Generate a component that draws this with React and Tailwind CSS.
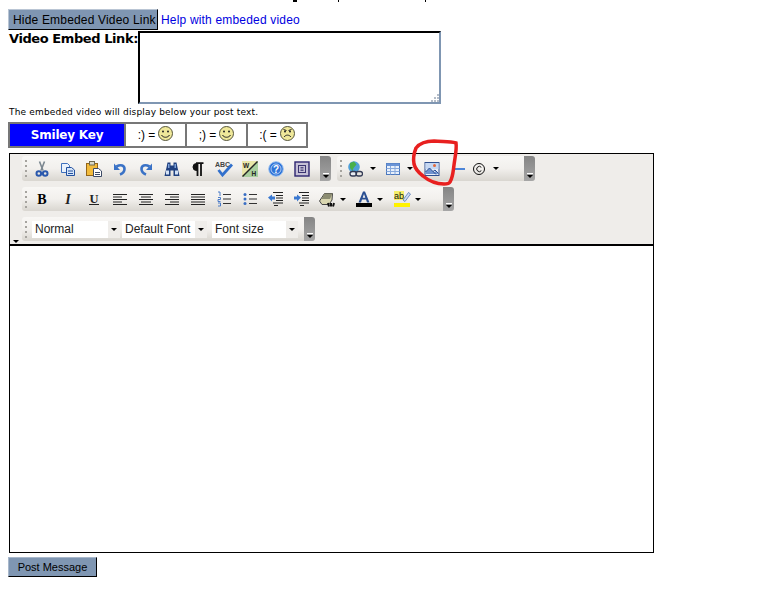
import React from "react";

const sans = "font-['DejaVu_Sans',sans-serif]";
const arial = "font-['Liberation_Sans',sans-serif]";

function Ic({ children }) {
  return (
    <svg width="16" height="16" viewBox="0 0 16 16" fill="none" className="shrink-0">
      {children}
    </svg>
  );
}

const Cut = () => (
  <Ic>
    <path d="M5.500 0.500l3.500 9M10.500 0.500L7 9.500" stroke="#7b8790" strokeWidth="1.600" />
    <circle cx="4.800" cy="12.500" r="2.300" stroke="#2a58ad" strokeWidth="2" />
    <circle cx="11.200" cy="12.500" r="2.300" stroke="#2a58ad" strokeWidth="2" />
  </Ic>
);
const Copy = () => (
  <Ic>
    <path d="M1.500 2.500h6l2 2v7h-8z" fill="#eaf2fc" stroke="#3f70bd" />
    <path d="M6.500 6.500h5l3 2.500v5.500h-8z" fill="#d5e5f8" stroke="#24519f" />
    <path d="M8 10h5M8 12.500h5" stroke="#24519f" />
  </Ic>
);
const Paste = () => (
  <Ic>
    <rect x="0.500" y="2.500" width="11" height="12" fill="#f2bb3c" stroke="#93651a" />
    <rect x="3.500" y="0.500" width="5" height="3.500" fill="#d8d8c8" stroke="#6f6a50" />
    <path d="M7.500 7.500h5l3 2.500v5.500h-8z" fill="#fff" stroke="#3c4a66" />
    <path d="M9 11.500h5M9 13.500h5" stroke="#3c4a66" />
  </Ic>
);
const Undo = () => (
  <Ic>
    <path d="M4.500 5.500c4.500-2.500 8-1 8 2.500 0 2.500-2 4.500-4.500 5.500" stroke="#3a72c6" strokeWidth="2.600" />
    <path d="M2 2.500v6.500h6z" fill="#3a72c6" />
  </Ic>
);
const Redo = () => (
  <Ic>
    <path d="M11.500 5.500C7 3 3.500 4.500 3.500 8c0 2.500 2 4.500 4.500 5.500" stroke="#3a72c6" strokeWidth="2.600" />
    <path d="M14 2.500v6.500H8z" fill="#3a72c6" />
  </Ic>
);
const Find = () => (
  <Ic>
    <path d="M3.500 1.500h3v3h3v-3h3l1 5 2 8.500H9.500V9.500h-3V15H.500l2-8.500z" fill="#20407f" />
    <rect x="2" y="9.500" width="3" height="4" fill="#d3e2f6" />
    <rect x="11" y="9.500" width="3" height="4" fill="#d3e2f6" />
    <rect x="4" y="3" width="1.500" height="4" fill="#7fa3da" />
    <rect x="10.500" y="3" width="1.500" height="4" fill="#7fa3da" />
  </Ic>
);
const Pilcrow = () => (
  <Ic>
    <path d="M7 2.500H6.500a3.500 3.500 0 0 0 0 7H7z" fill="#111" stroke="#111" />
    <path d="M7.500 2v13M11 2v13M6 2.200h7.500" stroke="#111" strokeWidth="1.800" />
  </Ic>
);
const Spell = () => (
  <svg width="18" height="16" viewBox="0 0 18 16" fill="none" className="shrink-0">
    <text x="0" y="6" fontSize="7" fontWeight="700" fontFamily="Liberation Sans, sans-serif" fill="#444">ABC</text>
    <path d="M3.500 9l4 5L17 3.500" stroke="#3270cc" strokeWidth="2.800" />
  </svg>
);
const Wh = () => (
  <Ic>
    <path d="M0 0h16L0 16z" fill="#e9e6a8" />
    <path d="M16 0v16H0z" fill="#a9cf9f" />
    <path d="M0.500 15.500L15.500 0.500" stroke="#222" strokeWidth="1.400" />
    <text x="1" y="7" fontSize="6.500" fontWeight="700" fontFamily="Liberation Sans, sans-serif" fill="#222">W</text>
    <text x="9.500" y="14.500" fontSize="6.500" fontWeight="700" fontFamily="Liberation Sans, sans-serif" fill="#222">H</text>
  </Ic>
);
const Help = () => (
  <Ic>
    <circle cx="8" cy="8" r="7.300" fill="#2f74d8" stroke="#9cc2f0" />
    <circle cx="8" cy="8" r="5" stroke="#cfe0f7" strokeWidth="0.800" />
    <text x="8" y="11.500" textAnchor="middle" fontSize="10" fontWeight="700" fontFamily="Liberation Sans, sans-serif" fill="#fff">?</text>
  </Ic>
);
const Source = () => (
  <Ic>
    <rect x="1" y="1" width="14" height="14" fill="#c5c0d6" stroke="#2d2470" strokeWidth="1.400" />
    <rect x="4.500" y="4.500" width="7" height="7" stroke="#3a3370" />
    <path d="M6.500 6.500h3M6.500 8h3M6.500 9.500h3" stroke="#3a3370" strokeWidth="0.800" />
  </Ic>
);
const LinkGlobe = () => (
  <Ic>
    <circle cx="7" cy="6" r="5.800" fill="#4fa0d8" />
    <path d="M3 2l4-1.500 2.500 3L6.500 7l-1 3-2.500-3z" fill="#49b04a" />
    <rect x="3" y="10.500" width="6.500" height="4.500" rx="2.200" stroke="#333b55" strokeWidth="1.300" fill="#e8ecf2" />
    <rect x="9" y="10.500" width="6.500" height="4.500" rx="2.200" stroke="#333b55" strokeWidth="1.300" />
  </Ic>
);
const TableIc = () => (
  <Ic>
    <rect x="1.500" y="2.500" width="13" height="11" fill="#e8f0fb" stroke="#4c78bd" />
    <rect x="1.500" y="2.500" width="13" height="2.500" fill="#6a94d6" />
    <path d="M1.500 7.500h13M1.500 10.500h13M5.500 5v8.500M10 5v8.500" stroke="#86a8dc" />
  </Ic>
);
const Pic = () => (
  <Ic>
    <rect x="1" y="1.500" width="14" height="13" fill="#e7eef9" stroke="#2d4f8f" />
    <path d="M1.500 2h13v6h-13z" fill="#c6d8f2" />
    <circle cx="10.500" cy="4.500" r="1.500" fill="#e2683a" />
    <path d="M1.500 13V11l4-4 4.500 4.500 1.500-1.500 3 3v0z" fill="#6f93cf" />
    <path d="M1.500 11l4-4 6.500 6.500M9 10.500l2-1.500 3.500 3.500" stroke="#2a4f94" />
  </Ic>
);
const Copyright = () => (
  <Ic>
    <circle cx="8" cy="8" r="5.500" stroke="#111" />
    <path d="M10.300 6.300a2.600 2.600 0 1 0 0 3.400" stroke="#111" />
  </Ic>
);
const Bold = () => (
  <Ic>
    <text x="8" y="12.500" textAnchor="middle" fontSize="14" fontWeight="700" fontFamily="Liberation Serif, serif" fill="#000">B</text>
  </Ic>
);
const Italic = () => (
  <Ic>
    <text x="8" y="12.500" textAnchor="middle" fontSize="14" fontStyle="italic" fontWeight="700" fontFamily="Liberation Serif, serif" fill="#222">I</text>
  </Ic>
);
const Under = () => (
  <Ic>
    <text x="8" y="11.500" textAnchor="middle" fontSize="12.500" fontWeight="700" fontFamily="Liberation Serif, serif" fill="#222">U</text>
    <path d="M3 13.500h10" stroke="#222" />
  </Ic>
);
const lines = {
  left: [14, 9, 14, 9, 14],
  center: [14, 10, 14, 10, 14],
  right: [14, 9, 14, 9, 14],
  justify: [14, 14, 14, 14, 14],
};
const Align = ({ kind }) => (
  <Ic>
    {[3.500, 6, 8.500, 11, 13.500].map((y, i) => {
      const w = lines[kind][i];
      const x = kind === "right" ? 15 - w : kind === "center" ? 8 - w / 2 : 1;
      return <path key={y} d={`M${x} ${y}h${w}`} stroke="#222" />;
    })}
  </Ic>
);
const OList = () => (
  <Ic>
    <path d="M2 1h2v4M2 6.500h2.500v2H2v2h2.500M2 12h2.500v3H2" stroke="#3a6fc4" strokeWidth="0.900" />
    <path d="M7 3.500h8M7 8h8M7 12.500h8" stroke="#333" strokeWidth="1.200" />
  </Ic>
);
const UList = () => (
  <Ic>
    <circle cx="3" cy="3.500" r="1.500" fill="#3a6fc4" />
    <circle cx="3" cy="8" r="1.500" fill="#3a6fc4" />
    <circle cx="3" cy="12.500" r="1.500" fill="#3a6fc4" />
    <path d="M7 3.500h8M7 8h8M7 12.500h8" stroke="#333" strokeWidth="1.200" />
  </Ic>
);
const Outdent = () => (
  <Ic>
    <path d="M0 6.500l4-3v2h3v3H4v2z" fill="#3a78d0" />
    <path d="M5 1.500h10M8 4.500h7M8 7h7M8 9.500h7M5 12h10M6 14.500h4" stroke="#222" />
  </Ic>
);
const Indent = () => (
  <Ic>
    <path d="M7 6.500l-4-3v2H0v3h3v2z" fill="#3a78d0" />
    <path d="M5 1.500h10M8 4.500h7M8 7h7M8 9.500h7M5 12h10M6 14.500h4" stroke="#222" />
  </Ic>
);
const Eraser = () => (
  <Ic>
    <path d="M0.500 10l5-7.500h8L13 9l-3 4.500H3z" fill="#d9d6b0" stroke="#444" />
    <path d="M5.500 2.500h8L11 8H2.500z" fill="#8c8c72" />
    <path d="M9 12l1 3.500M12 12v3.500M15 12l-1 3.500" stroke="#111" strokeWidth="2" />
  </Ic>
);
const FontColor = () => (
  <Ic>
    <path d="M2.500 11.500L7 0.500h2l4.500 11H11l-1-3H6l-1 3zM6.700 6.800h2.600L8 3z" fill="#2b4f92" fillRule="evenodd" />
    <rect x="0" y="12" width="16" height="4" fill="#000" />
  </Ic>
);
const Highlight = () => (
  <svg width="17" height="16" viewBox="0 0 17 16" fill="none" className="shrink-0">
    <rect x="0" y="0" width="10" height="9" fill="#f5ee6a" />
    <text x="0" y="8" fontSize="9" fontFamily="Liberation Sans, sans-serif" fill="#111">ab</text>
    <path d="M9 9l5.500-7.500 2 1.500-5.500 7.500z" fill="#cfdcf0" stroke="#3f6cb0" strokeWidth="0.700" />
    <rect x="0" y="12" width="16" height="4" fill="#fff200" />
  </svg>
);

function Btn({ children }) {
  return <div className="flex h-full w-[26px] shrink-0 items-center justify-center">{children}</div>;
}

function Caret({ className = "" }) {
  return <div className={`h-0 w-0 shrink-0 border-x-[3px] border-t-[3px] border-x-transparent border-t-black ${className}`} />;
}

// icon with its little dropdown arrow
function Split({ gap, className = "", children }) {
  return (
    <div style={{ gap }} className={`flex shrink-0 items-center ${className}`}>
      {children}
      <Caret />
    </div>
  );
}

function Grip() {
  return (
    <div className="flex w-[4px] shrink-0 flex-col gap-[3px] self-center">
      {[0, 1, 2, 3].map((i) => (
        <div key={i} className="h-[2px] w-[2px] bg-[#a5a39e]" />
      ))}
    </div>
  );
}

function Tab() {
  return (
    <div className="flex w-[11px] shrink-0 flex-col items-center justify-end rounded-r-[3px] bg-gradient-to-b from-[#858585] to-[#a6a6a6] pb-[3px]">
      <div className="mb-[1px] h-[1px] w-[6px] bg-white" />
      <Caret />
    </div>
  );
}

function Group({ width, height, children }) {
  return (
    <div
      style={{ width, height }}
      className="flex shrink-0 rounded-[3px] bg-gradient-to-b from-[#f8f7f5] via-[#f2f0ed] to-[#d9d6d0]"
    >
      <div className="flex min-w-0 flex-1 items-center pl-[3px]">{children}</div>
      <Tab />
    </div>
  );
}

function Select({ width, label }) {
  return (
    <div style={{ width }} className={`flex h-[17px] items-center justify-between bg-white pl-[3px] text-[12px] text-[#222] ${arial}`}>
      <span>{label}</span>
      <div className="flex h-full w-[12px] items-center justify-center bg-[#efedea]">
        <Caret />
      </div>
    </div>
  );
}

function Smiley({ sad }) {
  return (
    <svg width="15" height="15" viewBox="0 0 15 15" className="mb-[3px]">
      <circle cx="7.500" cy="7.500" r="7" fill="#efe89a" stroke="#55553a" />
      <circle cx="5" cy="5.500" r="1" fill="#222" />
      <circle cx="10" cy="5.500" r="1" fill="#222" />
      {sad ? (
        <path d="M4 11c2-2.500 5-2.500 7 0M3.500 3.500l3 1M11.500 3.500l-3 1" stroke="#222" fill="none" />
      ) : (
        <path d="M3.500 9c1.500 3 6.500 3 8 0" stroke="#222" fill="none" />
      )}
    </svg>
  );
}

function SmileyCell({ w, label, sad }) {
  return (
    <div style={{ width: w }} className={`flex items-center justify-center gap-[3px] border-l-2 border-l-[#777] bg-white text-[12px] text-black ${arial}`}>
      <span>{label}</span>
      <Smiley sad={sad} />
    </div>
  );
}

export default function App() {
  return (
    <div className={`relative min-h-[594px] w-[757px] bg-white pl-[8px] pt-[9px] ${sans}`}>
      {/* bottom of the line above, cut off by the top of the shot */}
      <div className="absolute left-[293px] top-0 h-[2px] w-[4px] bg-black" />
      <div className="absolute left-[338px] top-0 h-[2px] w-[1px] bg-black" />
      <div className="absolute left-[425px] top-0 h-[2px] w-[1px] bg-black" />

      <div className="flex items-center">
        <button className={`h-[21px] w-[150px] border border-t-[#b9c5d4] border-l-[#b9c5d4] border-r-black border-b-black bg-[#7f96b2] pl-[4px] pt-[1px] text-left text-[12px] tracking-[0.18px] whitespace-nowrap text-black ${arial}`}>
          Hide Embeded Video Link
        </button>
        <a className={`ml-[3px] pt-[1px] text-[12px] tracking-[0.18px] text-[#0000e0] ${arial}`}>Help with embeded video</a>
      </div>

      <div className="flex">
        <div className="w-[130px] pl-[1px] text-[13px] font-bold leading-[17px] tracking-[-0.42px] whitespace-nowrap text-black">Video Embed Link:</div>
        <div className="relative mt-[1px] h-[73px] w-[303px] border-2 border-t-black border-l-black border-r-[#7f96b2] border-b-[#7f96b2] bg-white">
          <svg width="8" height="8" viewBox="0 0 8 8" className="absolute bottom-0 right-0">
            <path d="M6 0h2v2H6zM3 3h2v2H3zM6 3h2v2H6zM0 6h2v2H0zM3 6h2v2H3zM6 6h2v2H6z" fill="#b5bdc8" />
          </svg>
        </div>
      </div>

      <p className="mt-[2px] pl-[1px] text-[9px] leading-[12px] tracking-[0.17px] text-black">The embeded video will display below your post text.</p>

      <div className="mt-[4px] flex h-[26px] w-[300px] border-2 border-[#777]">
        <div className="flex w-[114px] items-center justify-center bg-[#0000ff] text-[12px] font-bold tracking-[-0.2px] text-white">Smiley Key</div>
        <SmileyCell w={61} label=":) =" />
        <SmileyCell w={61} label=";) =" />
        <SmileyCell w={60} label=":( =" sad />
      </div>

      <div className="ml-[1px] mt-[5px] flex h-[400px] w-[645px] flex-col border border-black">
        <div className="relative flex h-[92px] flex-col gap-[6px] border-b-2 border-b-black bg-[#efedea] pl-[12px] pt-[2px]">
          <div className="flex gap-[6px]">
            <Group width={309} height={25}>
              <Grip />
              <Btn><Cut /></Btn>
              <Btn><Copy /></Btn>
              <Btn><Paste /></Btn>
              <Btn><Undo /></Btn>
              <Btn><Redo /></Btn>
              <Btn><Find /></Btn>
              <Btn><Pilcrow /></Btn>
              <Btn><Spell /></Btn>
              <Btn><Wh /></Btn>
              <Btn><Help /></Btn>
              <Btn><Source /></Btn>
            </Group>
            <Group width={198} height={25}>
              <Grip />
              <Split gap={7} className="ml-[3px]"><LinkGlobe /></Split>
              <Split gap={6} className="ml-[9px]"><TableIc /></Split>
              <div className="ml-[11px] shrink-0"><Pic /></div>
              <div className="ml-[15px] h-[2px] w-[10px] shrink-0 bg-[#4d86d8]" />
              <Split gap={6} className="ml-[6px]"><Copyright /></Split>
            </Group>
          </div>
          <Group width={432} height={24}>
            <Grip />
            <Btn><Bold /></Btn>
            <Btn><Italic /></Btn>
            <Btn><Under /></Btn>
            <Btn><Align kind="left" /></Btn>
            <Btn><Align kind="center" /></Btn>
            <Btn><Align kind="right" /></Btn>
            <Btn><Align kind="justify" /></Btn>
            <Btn><OList /></Btn>
            <Btn><UList /></Btn>
            <Btn><Outdent /></Btn>
            <Btn><Indent /></Btn>
            <Split gap={5} className="ml-[4px]"><Eraser /></Split>
            <Split gap={5} className="ml-[10px]"><FontColor /></Split>
            <Split gap={4} className="ml-[11px]"><Highlight /></Split>
          </Group>
          <Group width={293} height={24}>
            <Grip />
            <div className="ml-[3px] flex gap-[2px]">
              <Select width={88} label="Normal" />
              <Select width={85} label="Default Font" />
              <div className="w-[1px]" />
              <Select width={86} label="Font size" />
            </div>
          </Group>
          <Caret className="absolute bottom-[1px] left-[3px] border-t-[#777]" />
        </div>
        <div className="flex-1 bg-white" />
      </div>

      <button className={`mt-[4px] block h-[20px] w-[89px] border border-t-[#a8b8cc] border-l-[#a8b8cc] border-r-black border-b-black bg-[#7f96b2] text-[11px] text-black ${arial}`}>
        Post Message
      </button>

      <svg width="60" height="60" viewBox="0 0 60 60" fill="none" className="absolute left-[408px] top-[136px]">
        <path
          d="M8 12c4-5 10-7 18-7 8 1 15 0 22 2 1 6-1 14-2 22-1 7-1 12-4 17-1 2-3 2-6 2-8 0-15-3-21-8-4-3-8-8-9-12-1-5 0-11 2-16z"
          stroke="#e8201f"
          strokeWidth="3.500"
        />
      </svg>
    </div>
  );
}
